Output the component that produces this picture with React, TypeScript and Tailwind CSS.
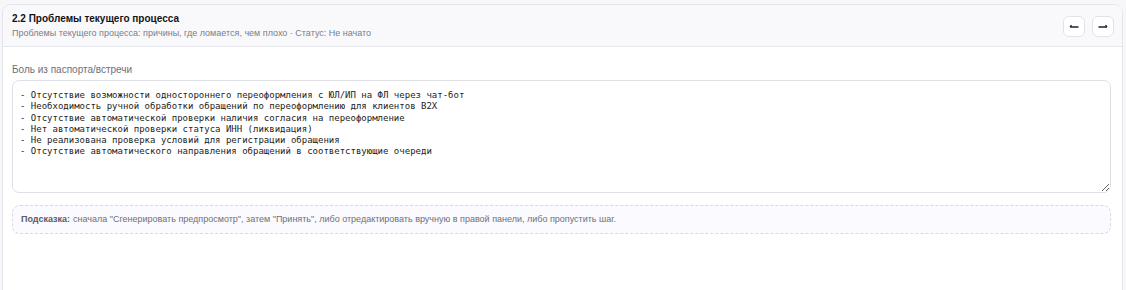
import React from 'react';

const painText = [
    '- Отсутствие возможности одностороннего переоформления с ЮЛ/ИП на ФЛ через чат-бот',
    '- Необходимость ручной обработки обращений по переоформлению для клиентов B2X',
    '- Отсутствие автоматической проверки наличия согласия на переоформление',
    '- Нет автоматической проверки статуса ИНН (ликвидация)',
    '- Не реализована проверка условий для регистрации обращения',
    '- Отсутствие автоматического направления обращений в соответствующие очереди',
].join('\n');

const App: React.FC = () => {
    return (
        <div
            className="w-full h-[290px] overflow-hidden bg-[#f7f7fa] pl-[2px] pr-[3px] pt-[4px]"
            style={{ fontFamily: '"Liberation Sans", Arial, sans-serif' }}
        >
            <div className="h-[300px] bg-white border border-[#e4e5ea] rounded-t-[9px] flex flex-col overflow-hidden">
                {/* header */}
                <div className="h-[42px] shrink-0 bg-[#f9f9fb] border-b border-[#e6e7ec] flex items-center justify-between pl-[9px] pr-[8px]">
                    <div className="flex flex-col pt-[1px]">
                        <h2 className="text-[10px] leading-[14px] font-bold text-[#111318]">2.2 Проблемы текущего процесса</h2>
                        <p className="text-[9px] leading-[13px] text-[#7a7d87] mt-[1px]">
                            Проблемы текущего процесса: причины, где ломается, чем плохо · Статус: Не начато
                        </p>
                    </div>
                    <div className="flex items-center gap-[7px] pt-[1px]">
                        <button className="w-[22px] h-[21px] rounded-[6px] border border-[#e2e3e8] bg-white flex items-center justify-center text-[#1d2230]">
                            <svg width="10" height="6" viewBox="0 0 10 6" fill="none" stroke="currentColor" strokeWidth="1.3">
                                <path d="M1 4h8.5M1 4l1.5-1.8" />
                            </svg>
                        </button>
                        <button className="w-[22px] h-[21px] rounded-[6px] border border-[#e2e3e8] bg-white flex items-center justify-center text-[#1d2230]">
                            <svg width="10" height="6" viewBox="0 0 10 6" fill="none" stroke="currentColor" strokeWidth="1.3">
                                <path d="M0.5 4H9M9 4L7.5 2.2" />
                            </svg>
                        </button>
                    </div>
                </div>

                {/* body */}
                <div className="flex flex-col pl-[9px] pr-[11px] pt-[17px]">
                    <label className="text-[10px] leading-[12px] text-[#6d707a] mb-[4px]">Боль из паспорта/встречи</label>
                    <textarea
                        readOnly
                        value={painText}
                        className="h-[113px] w-full resize-y rounded-[7px] border border-[#dfe0e6] bg-white px-[7px] pt-[9px] text-[9px] leading-[11.25px] text-[#1b1d23] outline-none"
                        style={{ fontFamily: '"DejaVu Sans Mono", "Liberation Mono", monospace' }}
                    />
                    <div className="mt-[12px] h-[29px] rounded-[8px] border border-dashed border-[#d8d9e3] bg-[#fafaff] flex items-center px-[8px] text-[9px] text-[#6d707a]">
                        <span className="font-bold text-[#585b66] mr-[3px]">Подсказка:</span>
                        сначала "Сгенерировать предпросмотр", затем "Принять", либо отредактировать вручную в правой панели, либо пропустить шаг.
                    </div>
                </div>
            </div>
        </div>
    );
};

export default App;
